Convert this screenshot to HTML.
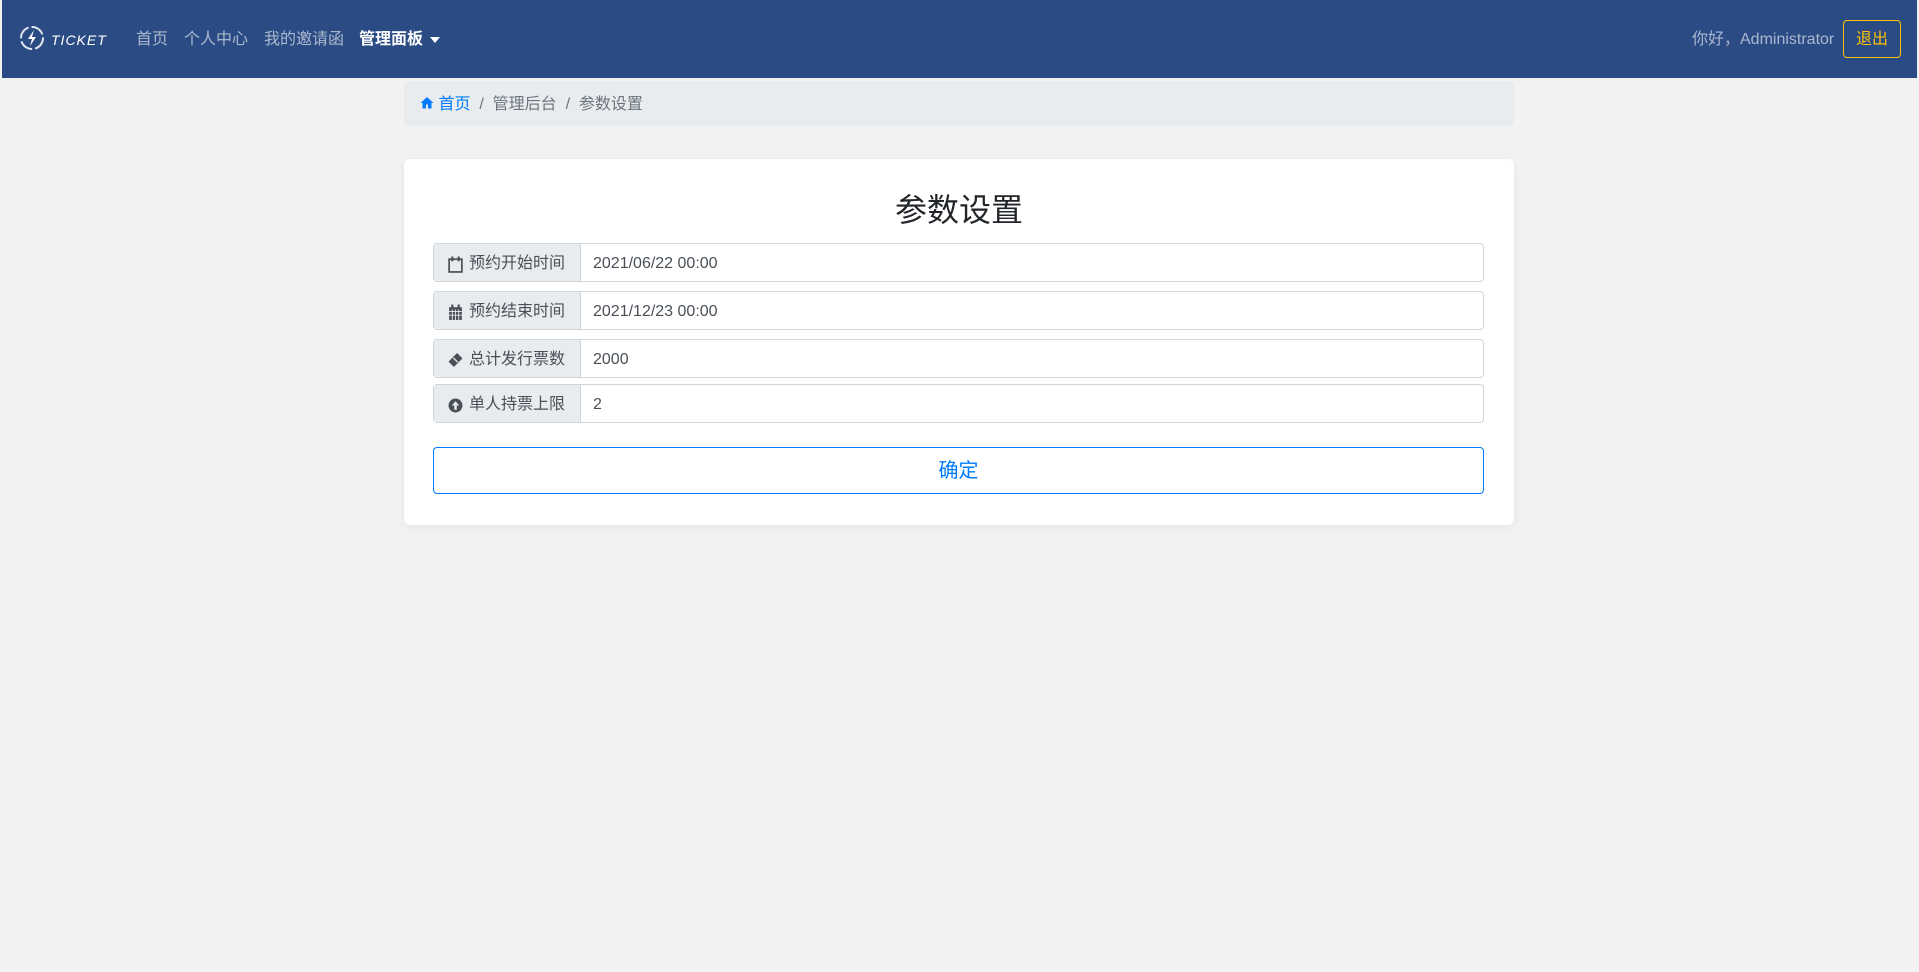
<!DOCTYPE html>
<html><head><meta charset="utf-8"><style>
*{box-sizing:border-box;margin:0;padding:0}
body{width:1919px;height:972px;background:#f2f2f2;font-family:"Liberation Sans","Noto Sans CJK SC",sans-serif;position:relative;overflow:hidden}
.nav{position:absolute;left:2px;top:0;width:1915px;height:78px;background:#2a4b84}
.nav .it{position:absolute;top:29px;font-size:16px;color:rgba(255,255,255,.6);line-height:22px}
.bc{position:absolute;left:404px;top:81px;width:1110px;height:45px;background:#e9ecef;border-radius:4px;font-size:16px;color:#6c757d;line-height:47px;padding-left:16px}
.bc a{color:#007bff}
.card{position:absolute;left:404px;top:159px;width:1110px;height:366px;background:#fff;border-radius:6px;box-shadow:0 2px 8px rgba(0,0,0,.06)}
h2{position:absolute;left:0;width:100%;top:29px;text-align:center;font-size:32px;font-weight:400;color:#212529;line-height:44px}
.row{position:absolute;left:29px;width:1051px;height:39px;border:1px solid #ced4da;border-radius:4px;display:flex;font-size:16px;color:#495057;line-height:20px}
.lab{width:147px;background:#e9ecef;border-right:1px solid #ced4da;display:flex;align-items:center;padding-left:14px;gap:6px;padding-top:3px}
.val{padding-left:12px;display:flex;align-items:center;padding-top:3px}
.btn{position:absolute;left:29px;top:288px;width:1051px;height:47px;border:1px solid #007bff;border-radius:4px;color:#007bff;font-size:20px;text-align:center;line-height:47px}
</style></head><body>
<div class="nav">
<svg style="position:absolute;left:15px;top:22px" width="30" height="32" viewBox="0 0 30 32"><circle cx="15" cy="16" r="11" fill="none" stroke="#dfe6f0" stroke-width="2" stroke-dasharray="14 3"/><path d="M17 8l-6 9h4l-2 7 6-9h-4z" fill="#fff"/></svg>
<span style="position:absolute;left:49px;top:29px;color:#fff;font-style:italic;font-size:14px;letter-spacing:1px;line-height:22px">TICKET</span>
<span class="it" style="left:134px">首页</span>
<span class="it" style="left:182px">个人中心</span>
<span class="it" style="left:262px">我的邀请函</span>
<span class="it" style="left:357px;color:#fff;font-weight:bold">管理面板 <span style="display:inline-block;border-left:5px solid transparent;border-right:5px solid transparent;border-top:6px solid #fff;vertical-align:middle;margin-left:3px"></span></span>
<span class="it" style="left:1690px">你好，Administrator</span>
<span style="position:absolute;left:1841px;top:20px;width:58px;height:38px;border:1px solid #ffc107;border-radius:4px;color:#ffc107;font-size:16px;text-align:center;line-height:37px">退出</span>
</div>
<div class="bc"><a><svg width="14" height="13" viewBox="0 0 14 13"><path d="M7 1L0.5 7h2v5.5h3.5v-4h2v4h3.5V7h2z" fill="#007bff"/></svg> 首页</a>&nbsp;&nbsp;/&nbsp;&nbsp;管理后台&nbsp;&nbsp;/&nbsp;&nbsp;参数设置</div>
<div class="card">
<h2>参数设置</h2>
<div class="row" style="top:84px"><div class="lab"><svg width="15" height="17" viewBox="0 0 14 16"><rect x="1" y="3" width="12" height="12" fill="none" stroke="#495057" stroke-width="1.6"/><rect x="3" y="0.5" width="2" height="4.5" fill="#495057"/><rect x="9" y="0.5" width="2" height="4.5" fill="#495057"/></svg>预约开始时间</div><div class="val">2021/06/22 00:00</div></div>
<div class="row" style="top:132px"><div class="lab"><svg width="15" height="17" viewBox="0 0 14 16"><rect x="1" y="3" width="12" height="12" fill="#495057"/><path d="M1 7h12M1 10.5h12M4 5v10M7 5v10M10 5v10" stroke="#e9ecef" stroke-width=".8"/><rect x="3" y="0.5" width="2" height="4" fill="#495057"/><rect x="9" y="0.5" width="2" height="4" fill="#495057"/></svg>预约结束时间</div><div class="val">2021/12/23 00:00</div></div>
<div class="row" style="top:180px"><div class="lab"><svg width="15" height="16" viewBox="0 0 14 14"><path d="M8.5 0.5l5 5-8 8-5-5z" fill="#495057"/><path d="M5 5l4 4" stroke="#e9ecef" stroke-width="1.2"/></svg>总计发行票数</div><div class="val">2000</div></div>
<div class="row" style="top:225px"><div class="lab"><svg width="15" height="15" viewBox="0 0 14 14"><circle cx="7" cy="7" r="6.5" fill="#495057"/><path d="M7 3L3.5 7h2.3v4h2.4V7h2.3z" fill="#e9ecef"/></svg>单人持票上限</div><div class="val">2</div></div>
<div class="btn">确定</div>
</div>
</body></html>
